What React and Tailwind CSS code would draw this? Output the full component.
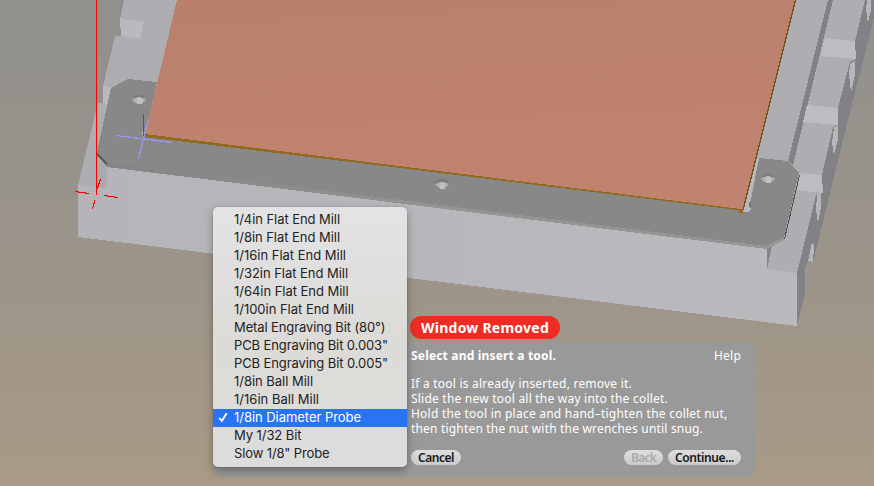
import { useLayoutEffect, useRef, useState } from "react";

const TOOLS = [
  ["1/4in Flat End Mill", 106],
  ["1/8in Flat End Mill", 106],
  ["1/16in Flat End Mill", 112],
  ["1/32in Flat End Mill", 114],
  ["1/64in Flat End Mill", 114.5],
  ["1/100in Flat End Mill", 120],
  ["Metal Engraving Bit (80°)", 151.5],
  ['PCB Engraving Bit 0.003"', 154],
  ['PCB Engraving Bit 0.005"', 154],
  ["1/8in Ball Mill", 79],
  ["1/16in Ball Mill", 85],
  ["1/8in Diameter Probe", 127],
  ["My 1/32 Bit", 67.5],
  ['Slow 1/8" Probe', 95.5],
];
const SELECTED = 11;

const STEPS = [
  ["If a tool is already inserted, remove it.", 221],
  ["Slide the new tool all the way into the collet.", 257],
  ["Hold the tool in place and hand–tighten the collet nut,", 316.5],
  ["then tighten the nut with the wrenches until snug.", 292],
];

// Tracks a single line of text out to a given width.
function Line({ text, width, className = "" }) {
  const ref = useRef(null);
  const [spacing, setSpacing] = useState(0);
  useLayoutEffect(() => {
    const natural = ref.current.getBoundingClientRect().width;
    setSpacing((width - natural) / text.length);
  }, [text, width]);
  return (
    <span ref={ref} className={`inline-block whitespace-pre ${className}`} style={{ letterSpacing: spacing }}>
      {text}
    </span>
  );
}

function Hole({ x, y }) {
  return (
    <g>
      <ellipse cx={x} cy={y} rx="6.5" ry="4.6" fill="#757575" />
      <ellipse cx={x} cy={y + 1} rx="6.8" ry="3" fill="#a3a3a3" />
      <ellipse cx={x} cy={y - 1.6} rx="4.8" ry="2.2" fill="#7d7d7d" />
      <ellipse cx={x} cy={y + 1.5} rx="4.8" ry="3.4" fill="#b3b2b5" />
      <rect x={x - 2} y={y - 1} width="5" height="6" fill="#c0bfc3" />
    </g>
  );
}

function Scene() {
  return (
    <svg className="absolute inset-0" width="874" height="486" viewBox="0 0 874 486" shapeRendering="crispEdges">
      <defs>
        <linearGradient id="backdrop" x1="0" y1="0" x2="0" y2="1">
          <stop offset="0" stopColor="#90908d" />
          <stop offset="0.5" stopColor="#9b948a" />
          <stop offset="1" stopColor="#a89a86" />
        </linearGradient>
        <linearGradient id="copper" x1="0" y1="0" x2="0.15" y2="1">
          <stop offset="0" stopColor="#ba806b" />
          <stop offset="1" stopColor="#c0836f" />
        </linearGradient>
        <linearGradient id="front" x1="0" y1="0" x2="1" y2="0">
          <stop offset="0" stopColor="#b5b4b9" />
          <stop offset="1" stopColor="#bab9be" />
        </linearGradient>
        <linearGradient id="lip" x1="0" y1="0" x2="1" y2="0">
          <stop offset="0" stopColor="#838383" />
          <stop offset="0.5" stopColor="#949493" />
          <stop offset="1" stopColor="#969695" />
        </linearGradient>
      </defs>
      <rect width="874" height="486" fill="url(#backdrop)" />

      {/* bed side */}
      <polygon points="864,0 874,0 874,17 843,140 813,262 808,261 805,268 805,294 797,325 790,325 790,260" fill="#828186" />
      {/* bed top */}
      <polygon
        points="124,0 865,0 855,41 856,59 850,62 838,108 838,125 833,127 822,175 823,193 816,195 797,273 767,269 107,188 78,185 98,103 103,103 103,86 115,36 121,36 120,19"
        fill="#aeadb2"
      />
      {/* bed front */}
      <polygon points="78,185 107,188 107,164 767,246 767,269 797,273 797,326 78,237" fill="url(#front)" />
      <polygon points="97,155 107,165 107,188 96,187" fill="#aaa9ae" />
      <polygon points="767,248 772,246 767,269" fill="#85848a" />

      {/* left clamps */}
      <polygon points="120,19 144,22 140,39 121,36" fill="#bab9be" />
      <polygon points="103,86 111,87 107,104 103,103" fill="#bab9be" />

      {/* right groove and clamps */}
      <polygon points="828,0 833,0 793,165 788,161" fill="#828186" />
      <polygon points="825,38 855,41 856,59 820,56" fill="#bdbcc1" />
      <polygon points="807,105 838,108 838,125 803,122" fill="#bdbcc1" />
      <polygon points="799,173 821,175 823,193 796,190" fill="#bdbcc1" />
      <polygon points="867,0 871,0 871,10 868,23 866,10" fill="#b7b6bb" />
      <polygon points="850,64 855,61 855,75 851,92 849,75" fill="#b7b6bb" />
      <polygon points="834,127 838,126 838,139 834,155 832,143" fill="#b7b6bb" />
      <polygon points="817,195 821,193 821,208 818,223 816,210" fill="#b7b6bb" />
      <polygon points="812,242 814,246 813,262 808,261" fill="#b7b6bb" />

      {/* bracket */}
      <polygon points="97,151 107,163 766,245 784,236 784,240 767,249 107,167 97,155" fill="url(#lip)" />
      <polygon points="97,151 107,163 107,166 97,155" fill="#5c5c5c" />
      <polygon
        points="111,88 128,79 157,82 146,132 743,209 751,200 759,158 788,161 799,173 784,237 766,246 107,163 97,152"
        fill="#888888"
      />
      <path d="M799.5 175 L784.5 239" stroke="#4d4d4d" strokeWidth="1" />
      <polygon points="759,158 756,158 743,212 748,212 751,209 751,206 749,204" fill="#b9b8bc" />
      <polygon points="749,202 751,204 751,209 749,207" fill="#777777" />
      <Hole x={139} y={99} />
      <Hole x={442} y={183.5} />
      <Hole x={768} y={178} />

      {/* copper board */}
      <polygon points="145,134 743,209 743,213 741,213 737,210 400,168 145,137" fill="#91691f" />
      <polygon points="177,0 796,0 743,209.3 145,134" fill="url(#copper)" />
      <path d="M795.5 0 L743 210" stroke="#765719" strokeWidth="1.3" />

      {/* origin axes */}
      <rect x="142" y="131" width="1" height="4" fill="#b5b4b6" />
      <path d="M143.5 114 V136" stroke="#636000" strokeWidth="1" />
      <path d="M116 135.5 L172 142.5 M148.5 119 L138.5 159" stroke="#9796fa" strokeWidth="1.2" fill="none" />
      <path d="M96.5 0 V195" stroke="#ff0000" strokeWidth="1" />
      <path
        d="M75 191.5 L89 193.5 M104 195.5 L118 197.5 M100.5 179 L97 189 M94.8 200 L92.5 209"
        stroke="#ff0000"
        strokeWidth="1.2"
        fill="none"
      />
    </svg>
  );
}

function PillButton({ label, width, className }) {
  return (
    <button
      className={`flex h-[15px] items-center justify-center rounded-full bg-linear-to-b from-[#dedede] to-[#cbcbcb] text-[12px] leading-[15px] font-semibold ${className}`}
    >
      <Line text={label} width={width} />
    </button>
  );
}

function Dialog() {
  return (
    <section className="absolute top-[342px] left-[213px] flex h-[135px] w-[543px] flex-col rounded-[10px] bg-[#999999] pr-[15px] pl-[198px] font-['Noto_Sans','Open_Sans',sans-serif] text-[12px] text-white">
      <header className="mt-[6px] flex h-[16px] items-center justify-between leading-[16px]">
        <h1 className="flex font-bold">
          <Line text="Select and insert a tool." width={145} />
        </h1>
        <a className="flex">
          <Line text="Help" width={27} />
        </a>
      </header>
      <div className="mt-[12px] flex flex-col items-start leading-[15px]">
        {STEPS.map(([text, width]) => (
          <Line key={text} text={text} width={width} className="h-[15px]" />
        ))}
      </div>
      <footer className="mt-[14px] flex">
        <PillButton label="Cancel" width={36} className="w-[50px] text-[#171717]" />
        <PillButton label="Back" width={25} className="ml-auto w-[39px] text-[#aaaaaa]" />
        <PillButton label="Continue..." width={59} className="ml-[5px] w-[73px] text-[#171717]" />
      </footer>
    </section>
  );
}

function ToolMenu() {
  return (
    <ul className="absolute top-[207px] left-[213px] w-[194px] rounded-[5px] bg-linear-to-b from-[#e3e3e5] via-[#dddbd7] to-[#dcdcdc] py-1 font-['Inter','Roboto',sans-serif] text-[13px] text-[#222222] shadow-[0_4px_10px_rgba(0,0,0,0.3),0_0_1px_rgba(0,0,0,0.5)]">
      {TOOLS.map(([name, width], i) => (
        <li
          key={name}
          className={`flex h-[18px] items-start pl-[21px] leading-[16px] ${i === SELECTED ? "relative bg-[#2874f5] text-white" : ""}`}
        >
          {i === SELECTED && (
            <svg className="absolute top-[3px] left-[5px]" width="11" height="11" viewBox="0 0 11 11">
              <path d="M1.3 6 L3.8 9 L8.7 1.2" fill="none" stroke="currentColor" strokeWidth="1.9" />
            </svg>
          )}
          <Line text={name} width={width} />
        </li>
      ))}
    </ul>
  );
}

export default function App() {
  return (
    <main className="relative h-[486px] w-[874px] overflow-hidden">
      <Scene />
      <Dialog />
      <div className="absolute top-[316px] left-[410px] flex h-[23px] w-[150px] items-center justify-center rounded-full bg-[#ee2c24] pb-px font-['Noto_Sans','Open_Sans',sans-serif] text-[14px] font-bold text-white">
        <Line text="Window Removed" width={128} />
      </div>
      <ToolMenu />
    </main>
  );
}
